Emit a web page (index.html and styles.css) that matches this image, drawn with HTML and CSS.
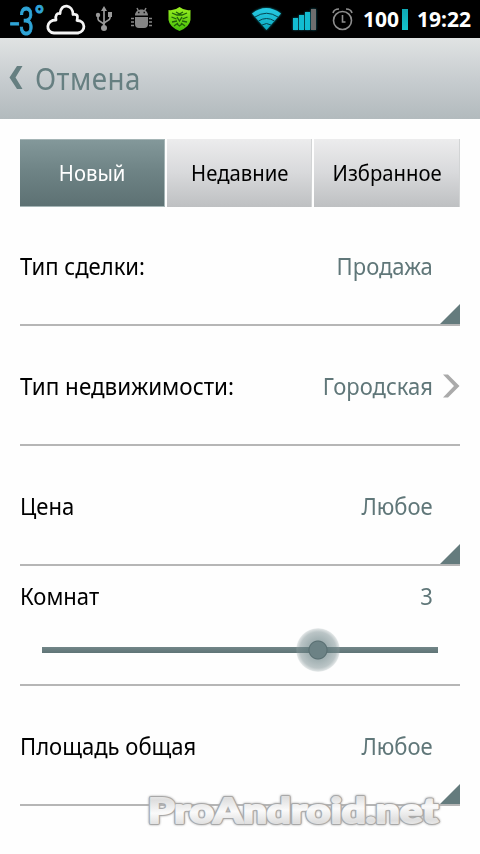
FILE: index.html
```html
<!DOCTYPE html>
<html lang="ru">
<head>
<meta charset="utf-8">
<title>Отмена</title>
<link rel="stylesheet" href="styles.css">
</head>
<body>
<div class="screen">
  <header class="status">
    <span class="temp"><span class="minus">-</span><span class="digit">3</span><span class="degree">°</span></span>
    <svg class="cloud" width="40" height="34" viewBox="46 2 40 34"><path d="M54 33c-9-1-8-13 2-13c-1-5 1-7 4-6.500c1-11 13-9 13 1c5-1 5 2 4 6c9 0 9 11 1 12.500Z" fill="none" stroke="#f4f4f4" stroke-width="2.800" stroke-linejoin="round"/></svg>
    <svg class="usb" width="20" height="28" viewBox="94 5 20 28"><g fill="none" stroke="#999" stroke-width="1.7"><path d="M104 10v18M98 16v3c0 3 6 3 6 6M110 15v3c0 3-6 3-6 6"/></g><g fill="#999"><path d="M104 6l3 5h-6ZM108 12h4v5h-4Z"/><circle cx="98" cy="15" r="2.2"/><circle cx="104" cy="28" r="3"/></g></svg>
    <svg class="robot" width="24" height="24" viewBox="130 6 24 24"><g fill="#858585"><path d="M135 15.500c0-8 13-8 13 0ZM135 17h13v7q0 4-4 4h-5q-4 0-4-4Z"/><path d="M137 8l2 4M146 8l-2 4M134 18.500h-3M134 22h-3M134 25.500h-3M149 18.500h3M149 22h3M149 25.500h3" stroke="#858585" stroke-width="1.500"/></g><path d="M138 12.500h1.500M143.500 12.500h1.500" stroke="#111" stroke-width="1.400"/></svg>
    <svg class="shield" width="24" height="26" viewBox="167 6 24 26"><defs><linearGradient id="green" x2="0" y2="1"><stop stop-color="#9cf022"/><stop offset="1" stop-color="#43bd08"/></linearGradient></defs><path d="M179.500 7q5 4 11 3v10q-1 7-11 11q-10-4-11-11V10q6 1 11-3Z" fill="url(#green)"/><path d="M172 13l5 2h5l5-2M171.500 17l5 2M187.500 17l-5 2M172 22l5-1M187 22l-5-1M174 26l4-3M185 26l-4-3M177 17l2.500 4l2.500-4M176 12l3.500 2l3.500-2M177 24l2.500 2l2.500-2" fill="none" stroke="#1f5f0a" stroke-width="1.300"/></svg>
    <svg class="wifi" width="32" height="24" viewBox="251 7 32 24"><defs><linearGradient id="cyan" x2="0" y2="1"><stop stop-color="#29cbe4"/><stop offset="1" stop-color="#0baac0"/></linearGradient></defs><path d="M252 13.500Q266 2.500 281 13.500L266.500 30Z" fill="url(#cyan)"/><path d="M255 17q11.500-7.500 23 0M258.500 21q8-5 16 0M262 25q4.500-3 9 0" fill="none" stroke="#064450" stroke-width="1"/></svg>
    <svg class="signal" width="26" height="24" viewBox="291 7 26 24"><path d="M293 18h5v12h-5ZM299 15h5v15h-5ZM305 12h5v18h-5Z" fill="#12bdd2"/><path d="M311 9h5v21h-5Z" fill="#6e6e6e"/></svg>
    <svg class="alarm" width="24" height="26" viewBox="331 6 24 26"><g fill="none" stroke="#8e8e8e" stroke-width="1.600"><circle cx="342.500" cy="20.500" r="9"/><path d="M333 13q1-4 6-4M352 13q-1-4-6-4M342.500 15v7h3"/></g></svg>
    <span class="percent">100</span>
    <span class="battery"></span>
    <time class="clock">19:22</time>
  </header>
  <nav class="bar">
    <svg class="back" width="14" height="25" viewBox="0 0 14 25"><path d="M8 1h5.500L6.500 12.500l7 11.500H8L.5 12.500Z" fill="#667f81"/></svg>
    <span class="title">Отмена</span>
  </nav>
  <main class="content">
    <div class="tabs">
      <button class="tab active"><span>Новый</span></button>
      <button class="tab"><span>Недавние</span></button>
      <button class="tab"><span>Избранное</span></button>
    </div>
    <section class="row corner"><span class="label">Тип сделки:</span><span class="value">Продажа</span></section>
    <section class="row"><span class="label wide">Тип недвижимости:</span><span class="value">Городская</span>
      <svg class="chevron" width="18" height="24" viewBox="0 0 18 24"><path d="M1 .5h5L17.500 12 6 23.500H1L12 12Z" fill="#aaa"/></svg>
    </section>
    <section class="row corner"><span class="label">Цена</span><span class="value">Любое</span></section>
    <section class="row rooms">
      <div class="line"><span class="label">Комнат</span><span class="value">3</span></div>
      <div class="slider"><div class="thumb"></div></div>
    </section>
    <section class="row corner"><span class="label">Площадь общая</span><span class="value">Любое</span></section>
  </main>
  <svg class="watermark" width="310" height="48" viewBox="0 0 310 48">
    <defs><linearGradient id="silver" x2=".05" y2=".3" spreadMethod="reflect"><stop stop-color="#fafafa"/><stop offset="1" stop-color="#dedede"/></linearGradient></defs>
    <text class="edge" x="10" y="36.500" textLength="290" lengthAdjust="spacingAndGlyphs">ProAndroid.net</text>
    <text class="face" x="10" y="36.500" textLength="290" lengthAdjust="spacingAndGlyphs">ProAndroid.net</text>
  </svg>
</div>
</body>
</html>
```
FILE: styles.css
```css
* { box-sizing: border-box; }
body { margin: 0; background: #fff; font-family: "Noto Sans", "Open Sans", sans-serif; color: #000; }
.screen { position: relative; width: 480px; height: 854px; overflow: hidden; background: #fefefe; }
.status { height: 38px; background: #000; color: #fff; display: flex; align-items: flex-start; }
.status svg { display: block; flex: none; }
.temp { width: 36px; height: 38px; margin-left: 10px; display: flex; color: #2fa4d6; font-family: Roboto, sans-serif; line-height: 38px; }
.minus { width: 9px; font-size: 32px; line-height: 45px; transform: scaleX(1.05); transform-origin: left; -webkit-text-stroke: .8px #2fa4d6; }
.digit { width: 15px; font-size: 38px; line-height: 45px; transform: scaleX(.7); transform-origin: left; -webkit-text-stroke: 1px #2fa4d6; }
.degree { width: 10px; font-size: 29px; line-height: 34px; -webkit-text-stroke: 1px #2fa4d6; }
.cloud { margin-top: 2px; }
.usb { margin: 5px 0 0 8px; }
.robot { margin: 6px 0 0 16px; }
.shield { margin: 6px 0 0 13px; }
.wifi { margin: 7px 0 0 60px; filter: drop-shadow(0 0 1px #0898aa); }
.signal { margin: 7px 0 0 8px; filter: drop-shadow(0 0 1px #08697a); }
.alarm { margin: 6px 0 0 14px; }
.percent, .clock { font-weight: 700; font-size: 21px; line-height: 38px; }
.percent { width: 39px; margin-left: 8px; }
.battery { width: 6px; height: 21px; margin-top: 9px; background: linear-gradient(#0fa9b5, #14c4cc); }
.clock { margin-left: 9px; }
.bar { height: 81px; padding: 0 9px; display: flex; align-items: center; gap: 12px; background: linear-gradient(#e0e3e3, #c8cdd0 50%, #b2babd); }
.back { flex: none; margin-top: -2px; }
.title { font-size: 30px; line-height: 40px; color: #667f81; letter-spacing: .5px; transform: scaleX(.925); transform-origin: left; }
.content { padding: 20px 20px 0; }
.tabs { height: 67px; display: grid; grid-template-columns: 145px 145px 146px; gap: 2px; }
.tab { height: 68px; border: 0; padding: 0 0 2px 2px; border-right: 1px solid #d2d4d5; background: linear-gradient(#ececed, #d8d9db 50%, #bec0c2); font: 22px/66px "Noto Sans", sans-serif; color: #000; white-space: nowrap; }
.tab span { display: inline-block; transform: scaleX(.922); }
.tab.active { padding-left: 0; background: linear-gradient(#83989a, #6d8284 50%, #5d7173); color: #fff; border: 1px solid #a5b5b6; border-left: 0; line-height: 64px; }
.row { position: relative; height: 120px; border-bottom: 2px solid #b6b6b6; padding-right: 27px; display: flex; align-items: center; justify-content: space-between; font-size: 24px; line-height: 60px; white-space: nowrap; }
.label, .value { display: block; padding-top: 2px; transform: scaleX(.918); }
.label { transform-origin: left; }
.label.wide { transform: scaleX(.934); }
.value { color: #607779; transform-origin: right; }
.corner::after { content: ""; position: absolute; right: 0; bottom: 0; width: 20px; height: 20px; background: #647b7d; clip-path: polygon(100% 0, 100% 100%, 0 100%); }
.chevron { position: absolute; right: 0; top: 48px; }
.rooms { display: block; padding-right: 0; }
.line { height: 60px; padding-right: 27px; display: flex; justify-content: space-between; }
.line .label, .line .value { padding-top: 0; }
.slider { height: 6px; margin: 21px 22px 0; background: linear-gradient(#728688, #5f7476); display: flex; align-items: center; }
.thumb { flex: none; width: 44px; height: 44px; margin-left: 254px; border-radius: 50%; background: radial-gradient(circle, #6c8285 0 8px, #566c6f 9px, rgba(100,125,128,.6) 10px, rgba(120,140,143,.5) 18px, rgba(150,165,167,.32) 21px, rgba(160,175,177,.1) 22px); }
.watermark { position: absolute; left: 138px; top: 786px; }
.watermark text { font: 900 35px Lato, sans-serif; stroke-linejoin: round; }
.edge { fill: #a8a8a8; stroke: #a8a8a8; stroke-width: 4px; filter: drop-shadow(0 0 1px #aaa); }
.face { fill: url(#silver); stroke: url(#silver); stroke-width: 2px; }
```
